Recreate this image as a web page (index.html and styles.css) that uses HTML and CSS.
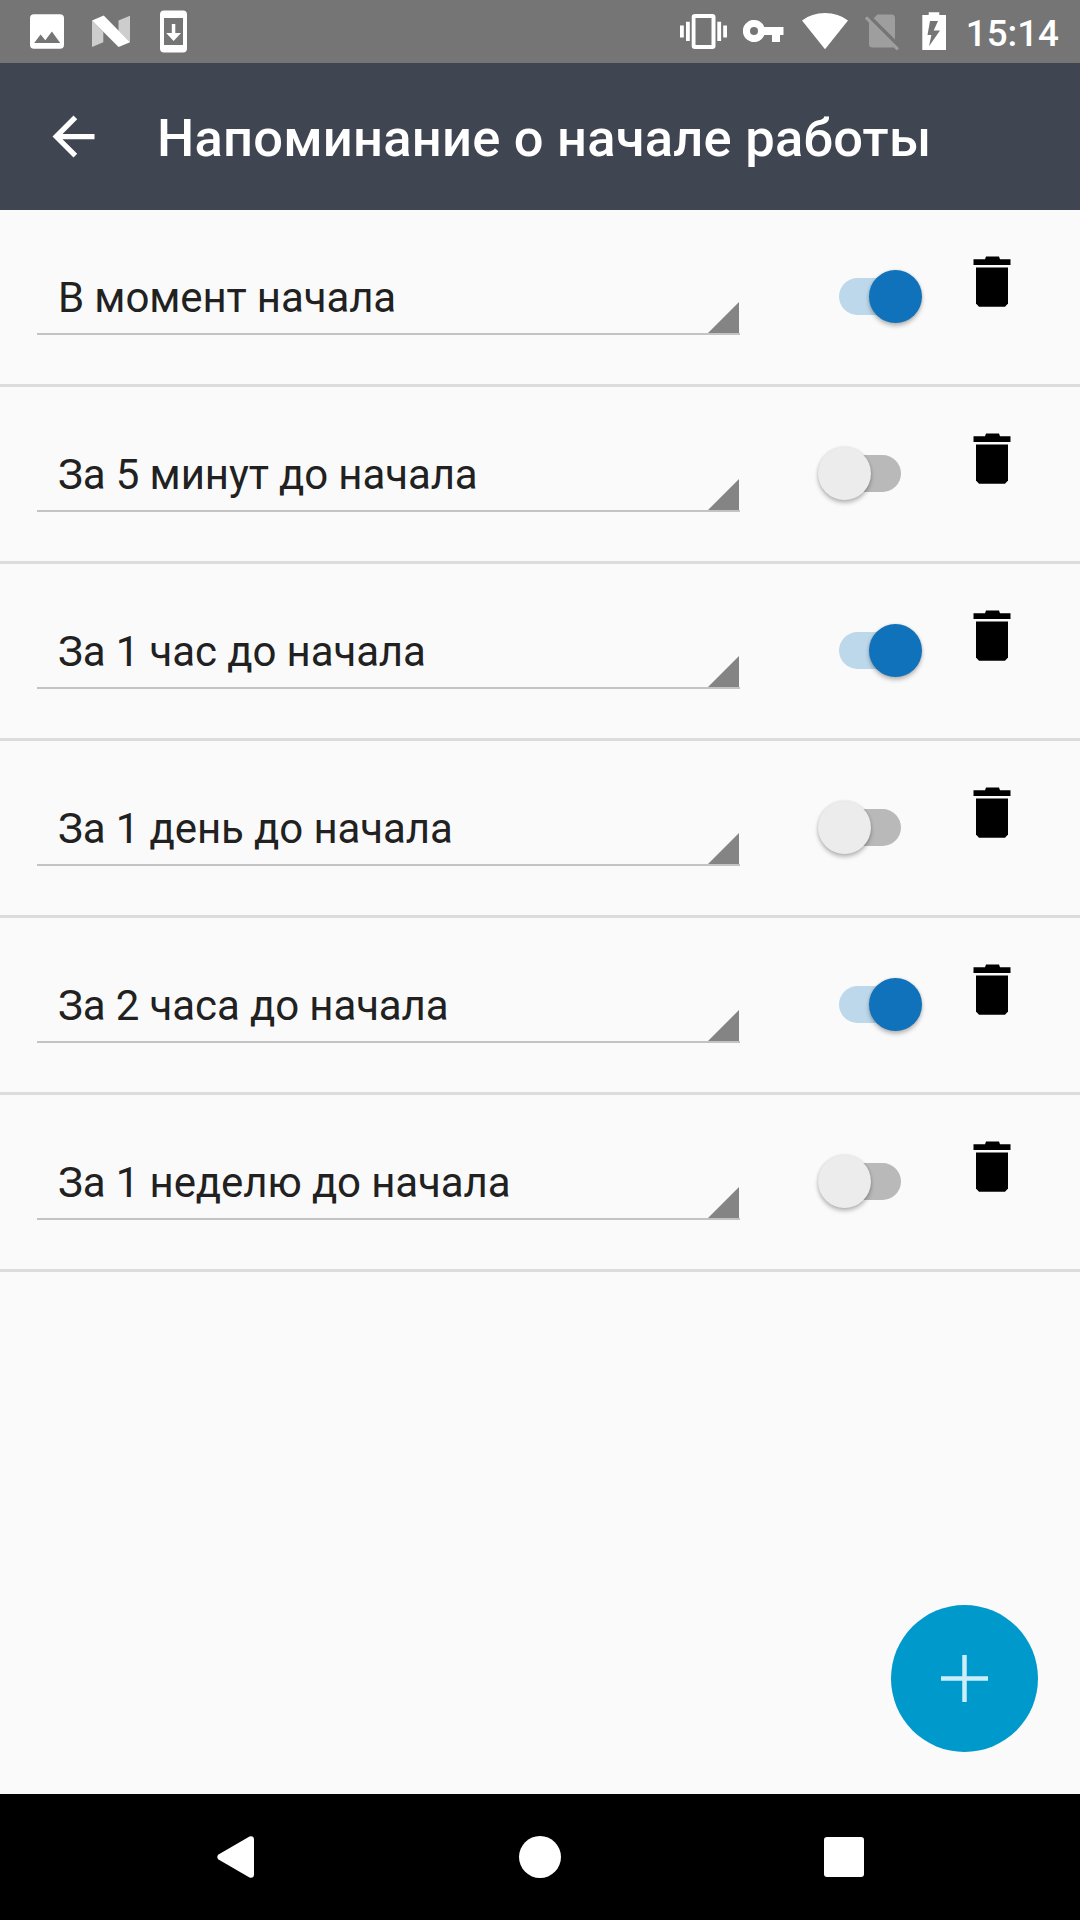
FILE: index.html
```html
<!DOCTYPE html>
<html lang="ru">
<head>
    <meta charset="utf-8">
    <title>Напоминание о начале работы</title>
    <link rel="stylesheet" href="styles.css">
</head>
<body>
    <svg class="sprite">
        <symbol id="trash" viewBox="0 0 38 52">
            <path d="M13 0.6h13l1 2.7h10.5v5.6H0.5V3.3H12z"/>
            <path d="M3 11.5h32v36l-3 3.2H6l-3-3.2z"/>
        </symbol>
    </svg>

    <div class="screen">
        <!-- Статус-бар -->
        <div class="status-bar">
            <div class="status-left">
                <svg width="34" height="63" viewBox="30.5 0 34 63">
                    <path fill-rule="evenodd" d="M34.5 14.3h26a4 4 0 0 1 4 4v26.400a4 4 0 0 1-4 4h-26a4 4 0 0 1-4-4V18.300a4 4 0 0 1 4-4zM34.700 43h26l-8.300-11.400-6.600 8.600-4.700-5.700z"/>
                </svg>
                <svg width="38" height="63" viewBox="91.500 0 38 63">
                    <path fill="#cdcdcd" d="M91.500 20.500l11.300 11.500v10.300L91.500 47zM118 20.600l11.500-4.800v26.400L118 31z"/>
                    <path d="M91.500 20.500l11.700-4.900 26.300 26.600-11.400 4.900z"/>
                </svg>
                <svg width="27" height="63" viewBox="160 0 27 63">
                    <path fill-rule="evenodd" d="M164 10.500h19a4 4 0 0 1 4 4v34a4 4 0 0 1-4 4h-19a4 4 0 0 1-4-4v-34a4 4 0 0 1 4-4zM164 18v27h19V18z"/>
                    <path d="M171.800 24h3.500v9h5.700l-7.400 8-7.400-8h5.600z"/>
                </svg>
            </div>
            <div class="status-right">
                <svg width="47" height="63" viewBox="680 0 47 63">
                    <path d="M680 25.500h3.800V37.500H680zM686 21.800h3.800V41h-3.800zM717.300 21.800h3.800V41h-3.800zM723.200 25.500h3.800V37.500h-3.800z"/>
                    <path fill-rule="evenodd" d="M695 14h17.200a3.300 3.300 0 0 1 3.300 3.300v28.400a3.300 3.300 0 0 1-3.300 3.300H695a3.300 3.300 0 0 1-3.300-3.300V17.300A3.300 3.300 0 0 1 695 14zM695.500 18v27h16V18z"/>
                </svg>
                <svg width="41" height="63" viewBox="743 0 41 63">
                    <path fill-rule="evenodd" d="M764.300 27h19.200v8H780v7h-8v-7h-7.700a11.100 11.100 0 1 1 0-8zM754 27a4 4 0 1 0 0 8 4 4 0 0 0 0-8z"/>
                </svg>
                <svg width="46" height="63" viewBox="802 0 46 63">
                    <path d="M802 20.500Q811.500 13 825 13T848 20.500L825 49.200z"/>
                </svg>
                <svg class="no-sim" width="35" height="63" viewBox="864 0 35 63">
                    <path d="M877.500 14.500h14a3.500 3.500 0 0 1 3.500 3.500v21.500L873.700 18.300z"/>
                    <path d="M864.800 18.500l2.200-2.200 32 32-2.200 2.200-3-3H872.500a3.500 3.500 0 0 1-3.500-3.500V22.700z"/>
                </svg>
                <svg width="24" height="63" viewBox="922 0 24 63">
                    <path fill-rule="evenodd" d="M928.700 12.300h10.600V15h6.700v35h-23.700V15h6.400zM930 21l-2.500 14h3.900L929 46.300l11-15.800h-6.300L938 21z"/>
                </svg>
                <span class="clock">15:14</span>
            </div>
        </div>

        <!-- Заголовок -->
        <div class="app-bar">
            <svg class="back" viewBox="0 0 24 24">
                <path d="M20 11H7.830l5.590-5.590L12 4l-8 8 8 8 1.410-1.410L7.830 13H20v-2z"/>
            </svg>
            <h1>Напоминание о начале работы</h1>
        </div>

        <!-- Список напоминаний -->
        <div class="list">
            <div class="row">
                <div class="spinner">В момент начала</div>
                <div class="switch on"><div class="thumb"></div></div>
                <svg class="trash"><use href="#trash"/></svg>
            </div>
            <div class="row">
                <div class="spinner">За 5 минут до начала</div>
                <div class="switch"><div class="thumb"></div></div>
                <svg class="trash"><use href="#trash"/></svg>
            </div>
            <div class="row">
                <div class="spinner">За 1 час до начала</div>
                <div class="switch on"><div class="thumb"></div></div>
                <svg class="trash"><use href="#trash"/></svg>
            </div>
            <div class="row">
                <div class="spinner">За 1 день до начала</div>
                <div class="switch"><div class="thumb"></div></div>
                <svg class="trash"><use href="#trash"/></svg>
            </div>
            <div class="row">
                <div class="spinner">За 2 часа до начала</div>
                <div class="switch on"><div class="thumb"></div></div>
                <svg class="trash"><use href="#trash"/></svg>
            </div>
            <div class="row">
                <div class="spinner">За 1 неделю до начала</div>
                <div class="switch"><div class="thumb"></div></div>
                <svg class="trash"><use href="#trash"/></svg>
            </div>

            <!-- Кнопка добавления -->
            <div class="fab">
                <svg width="47" height="47" viewBox="0 0 47 47">
                    <path d="M23.500 0v47M0 23.500h47"/>
                </svg>
            </div>
        </div>

        <!-- Навигация -->
        <div class="nav-bar">
            <svg width="37" height="42" viewBox="0 0 37 42">
                <path d="M1.500 18.500L32.500 0.500Q36.800-0.500 37 3.500v35q-0.200 4-4.500 3L1.500 23.500Q-1 21 1.500 18.500z"/>
            </svg>
            <div class="home"></div>
            <div class="recent"></div>
        </div>
    </div>
</body>
</html>
```
FILE: styles.css
```css
* {
    box-sizing: border-box;
}
body {
    margin: 0;
    font-family: Roboto, "Noto Sans", sans-serif;
    background-color: #fafafa;
}
svg {
    display: block;
    flex: none;
}
.sprite {
    position: absolute;
    width: 0;
    height: 0;
}
.screen {
    display: flex;
    flex-direction: column;
    width: 1080px;
    height: 1920px;
    overflow: hidden;
}

/* Статус-бар */
.status-bar {
    display: flex;
    justify-content: space-between;
    height: 63px;
    padding: 0 21px 0 30px;
    background-color: #757575;
    color: white;
    fill: white;
}
.status-left {
    display: flex;
    gap: 28px;
}
.status-left svg:last-child {
    margin-left: 2px;
}
.status-right {
    display: flex;
    gap: 16px;
}
.status-right svg:nth-child(3) {
    margin-left: 2px;
}
.status-right svg:nth-child(5) {
    margin-left: 7px;
}
.no-sim {
    fill: #9e9e9e;
}
.clock {
    margin-left: 4px;
    font-size: 36.75px;
    font-weight: 500;
    line-height: 67px;
}

/* Заголовок */
.app-bar {
    display: flex;
    align-items: center;
    height: 147px;
    padding-left: 42px;
    background-color: #404552;
    color: white;
    fill: white;
}
.back {
    width: 63px;
    height: 63px;
}
h1 {
    margin: 3px 0 0 52px;
    font-size: 52.5px;
    font-weight: 500;
    line-height: 62px;
    letter-spacing: 0.22px;
    white-space: nowrap;
}

/* Список */
.list {
    position: relative;
    flex: 1;
}
.row {
    display: flex;
    align-items: flex-start;
    height: 177px;
    padding-left: 37px;
    border-bottom: 3px solid #dcdcdc;
}
.spinner {
    position: relative;
    width: 703px;
    height: 125px;
    padding: 63px 0 0 21px;
    border-bottom: 2px solid #c3c3c3;
    color: #212121;
    font-size: 42px;
    line-height: 50px;
    letter-spacing: -0.12px;
}
.spinner::after {
    content: "";
    position: absolute;
    right: 1px;
    bottom: 0;
    border-left: 31px solid transparent;
    border-bottom: 31px solid #848484;
}
.switch {
    width: 62px;
    height: 37px;
    margin: 68px 0 0 99px;
    border-radius: 19px;
    background-color: #b9b9b9;
}
.switch.on {
    background-color: #bdd8ea;
}
.thumb {
    width: 53px;
    height: 53px;
    border-radius: 50%;
    background-color: #ececec;
    box-shadow: 0 3px 4px rgba(0, 0, 0, 0.25), 0 0 3px rgba(0, 0, 0, 0.12);
    transform: translate(-21px, -8px);
}
.on .thumb {
    background-color: #1072ba;
    transform: translate(30px, -8px);
}
.trash {
    width: 38px;
    height: 52px;
    margin: 46px 0 0 72px;
}

.fab {
    position: absolute;
    right: 42px;
    bottom: 42px;
    display: flex;
    align-items: center;
    justify-content: center;
    width: 147px;
    height: 147px;
    border-radius: 50%;
    background-color: #0099cc;
}
.fab svg {
    stroke: #cceef9;
    stroke-width: 4.5;
}

/* Навигация */
.nav-bar {
    display: flex;
    align-items: center;
    justify-content: space-between;
    height: 126px;
    padding: 0 216px 0 217px;
    background-color: black;
    fill: white;
}
.home {
    width: 42px;
    height: 42px;
    margin-left: 1px;
    border-radius: 50%;
    background-color: white;
}
.recent {
    width: 40px;
    height: 40px;
    border-radius: 3px;
    background-color: white;
}
```
